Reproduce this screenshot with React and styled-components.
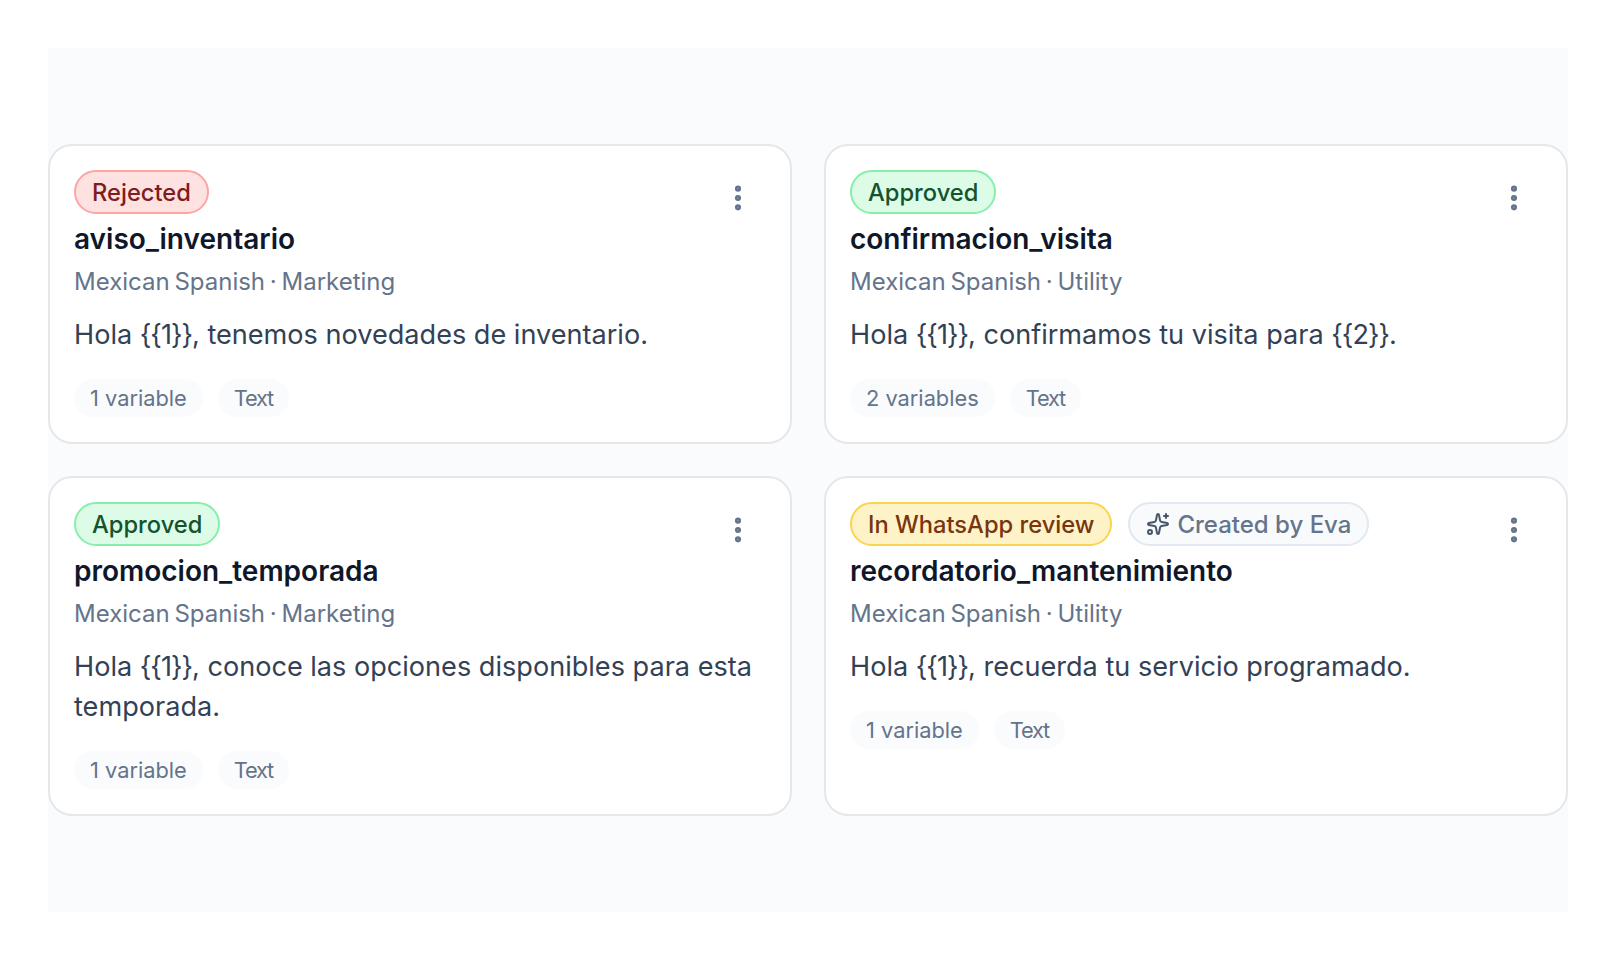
import styled, { createGlobalStyle } from "styled-components";
import { EllipsisVertical, Sparkles } from "lucide-react";

const templates = [
  {
    name: "aviso_inventario",
    status: "Rejected",
    meta: "Mexican Spanish · Marketing",
    body: "Hola {{1}}, tenemos novedades de inventario.",
    chips: ["1 variable", "Text"],
  },
  {
    name: "confirmacion_visita",
    status: "Approved",
    meta: "Mexican Spanish · Utility",
    body: "Hola {{1}}, confirmamos tu visita para {{2}}.",
    chips: ["2 variables", "Text"],
  },
  {
    name: "promocion_temporada",
    status: "Approved",
    meta: "Mexican Spanish · Marketing",
    body: "Hola {{1}}, conoce las opciones disponibles para esta\ntemporada.",
    chips: ["1 variable", "Text"],
  },
  {
    name: "recordatorio_mantenimiento",
    status: "In WhatsApp review",
    eva: true,
    meta: "Mexican Spanish · Utility",
    body: "Hola {{1}}, recuerda tu servicio programado.",
    chips: ["1 variable", "Text"],
  },
];

const statusColors = {
  Rejected: { bg: "#fee2e2", border: "#fca5a5", text: "#7f1d1d" },
  Approved: { bg: "#dcfce7", border: "#86efac", text: "#14532d" },
  "In WhatsApp review": { bg: "#fef3c7", border: "#fcd34d", text: "#78350f" },
};

// variables like {{1}} sit tighter than the running text
const renderBody = (text) =>
  text.split(/(\{\{\d\}\}|\n)/).map((part, i) => {
    if (part === "\n") return <br key={i} />;
    if (part.startsWith("{{")) return <Variable key={i}>{part}</Variable>;
    return part;
  });

const App = () => {
  return (
    <>
      <GlobalStyle />
      <Panel>
        <Grid>
          {templates.map((t) => (
            <Card key={t.name}>
              <CardTop>
                <Badges>
                  <StatusBadge $status={t.status}>{t.status}</StatusBadge>
                  {t.eva && (
                    <EvaBadge>
                      <Sparkles size={24} strokeWidth={2} />
                      Created by Eva
                    </EvaBadge>
                  )}
                </Badges>
                <MenuButton aria-label="More">
                  <EllipsisVertical size={32} strokeWidth={2.6} />
                </MenuButton>
              </CardTop>
              <Title>{t.name}</Title>
              <Meta>{t.meta}</Meta>
              <Body>{renderBody(t.body)}</Body>
              <Chips>
                {t.chips.map((c) => (
                  <Chip key={c} $tight={c === "Text"}>
                    {c}
                  </Chip>
                ))}
              </Chips>
            </Card>
          ))}
        </Grid>
      </Panel>
    </>
  );
};

//Styled Components
const GlobalStyle = createGlobalStyle`
  body {
    margin: 0;
    background: #ffffff;
    font-family: Inter, "Liberation Sans", sans-serif;
  }
`;

const Panel = styled.div`
  margin: 48px;
  height: 864px;
  background: #fafbfd;
  display: flex;
  align-items: center;
`;

const Grid = styled.div`
  width: 100%;
  display: grid;
  grid-template-columns: 1fr 1fr;
  gap: 32px;
`;

const Card = styled.div`
  background: #ffffff;
  border: 2px solid #e5e7eb;
  border-radius: 24px;
  padding: 24px 24px 25px;
  display: flex;
  flex-direction: column;
  align-items: flex-start;
`;

const CardTop = styled.div`
  width: 100%;
  display: flex;
  justify-content: space-between;
  align-items: flex-start;
`;

const Badges = styled.div`
  display: flex;
  gap: 16px;
`;

const StatusBadge = styled.span`
  height: 44px;
  box-sizing: border-box;
  padding: 0 16px;
  display: inline-flex;
  align-items: center;
  border-radius: 22px;
  border: 2px solid ${(p) => statusColors[p.$status].border};
  background: ${(p) => statusColors[p.$status].bg};
  color: ${(p) => statusColors[p.$status].text};
  font-size: 23.7px;
  font-weight: 500;
`;

const EvaBadge = styled.span`
  height: 44px;
  box-sizing: border-box;
  padding: 0 16px;
  display: inline-flex;
  align-items: center;
  gap: 7px;
  border-radius: 22px;
  border: 2px solid #e2e8f0;
  background: #f8fafc;
  color: #64748b;
  font-size: 24px;
  font-weight: 500;
  svg {
    color: #475569;
  }
`;

const MenuButton = styled.button`
  width: 44px;
  height: 32px;
  margin: 12px 6px 0 0;
  padding: 0;
  border: 0;
  background: transparent;
  color: #64748b;
  display: flex;
  align-items: center;
  justify-content: center;
`;

const Title = styled.h3`
  margin: 4px 0 0;
  font-size: 28px;
  line-height: 42px;
  font-weight: 600;
  color: #0f172a;
`;

const Meta = styled.div`
  margin-top: 6px;
  font-size: 24px;
  line-height: 32px;
  word-spacing: -2px;
  color: #64748b;
`;

const Body = styled.p`
  margin: 17px 0 0;
  font-size: 27.1px;
  line-height: 40px;
  color: #334155;
`;

const Variable = styled.span`
  letter-spacing: -1px;
`;

const Chips = styled.div`
  margin-top: 24px;
  display: flex;
  gap: 15px;
`;

const Chip = styled.span`
  height: 38px;
  padding: 0 16px;
  display: inline-flex;
  align-items: center;
  border-radius: 19px;
  background: #fafbfd;
  color: #64748b;
  font-size: 21.8px;
  letter-spacing: ${(p) => (p.$tight ? "-1.2px" : "0")};
`;

export default App;
